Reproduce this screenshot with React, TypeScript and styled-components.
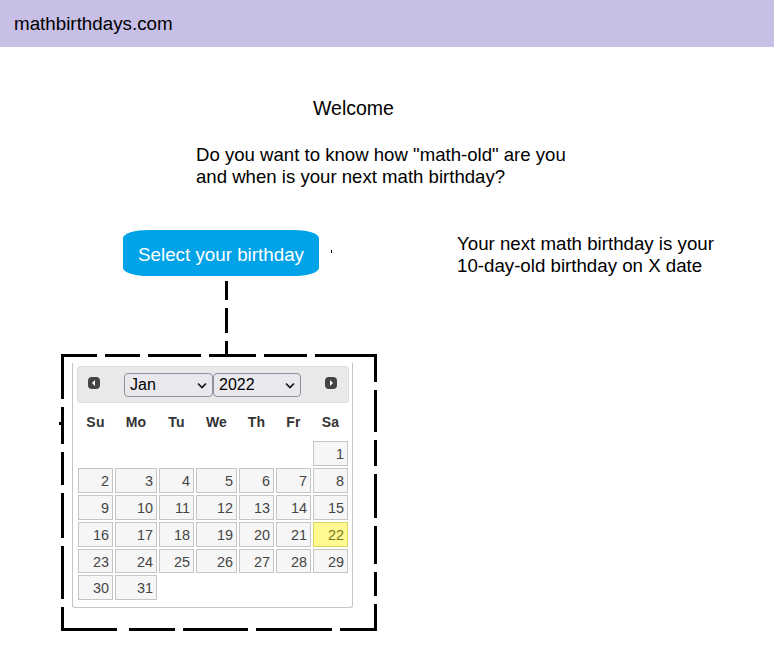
import React from "react";
import styled, { createGlobalStyle } from "styled-components";

const Global = createGlobalStyle`
  * { box-sizing: border-box; }
  body { margin: 0; background: #fff; color: #000; font-family: "Liberation Sans", Arial, sans-serif; }
`;

const Page = styled.div`
  width: 774px;
  height: 666px;
  overflow: hidden;
`;

const Bar = styled.header`
  height: 47px;
  padding: 13px 0 0 14px;
  background: #c8bfe7;
  font-size: 18.8px;
  line-height: 21px;
`;

const Intro = styled.section`
  height: 183px;
  padding: 50px 0 0 196px;
`;

const Heading = styled.h1`
  margin: 0 0 24px 117px;
  font-size: 19.5px;
  font-weight: 400;
  line-height: 23px;
`;

const Text = styled.p<{ $size: number }>`
  margin: 0;
  font-size: ${(p) => p.$size}px;
  line-height: 22px;
  white-space: nowrap;
`;

const Main = styled.main`
  display: grid;
  grid-template-columns: 457px auto;
`;

const Picker = styled.section`
  padding-left: 59px;
`;

const ButtonRow = styled.div`
  display: flex;
  align-items: flex-start;
  padding-left: 64px;
`;

const SelectButton = styled.button`
  width: 196px;
  height: 46px;
  padding: 4px 0 0;
  border: 0;
  border-radius: 26px / 8px;
  background: #00a2e8;
  color: #fff;
  font: 18.8px/22px "Liberation Sans", Arial, sans-serif;
  white-space: nowrap;
`;

const Speck = styled.i`
  width: 1px;
  height: 3px;
  margin: 20px 0 0 12px;
  background: #000;
`;

const Connector = styled.svg`
  display: block;
  margin: 5px 0 0 166px;
`;

const Frame = styled.div`
  position: relative;
  width: 318px;
  height: 277px;
  padding: 9px 0 0 13px;
`;

const Outline = styled.svg`
  position: absolute;
  inset: 0;
`;

const Calendar = styled.div`
  width: 281px;
  height: 245px;
  padding: 3px 3px 0 4px;
  border: 1px solid #c5c5c5;
  border-top: 0;
  border-radius: 0 0 3px 3px;
`;

const CalendarHeader = styled.div`
  display: flex;
  align-items: flex-start;
  width: 272px;
  height: 37px;
  padding: 7px 11px 0 10px;
  background: #e9e9e9;
  border: 1px solid #dddddd;
  border-radius: 3px;
`;

const ArrowIcon = styled.svg`
  margin-top: 3px;
`;

const Selects = styled.div`
  display: flex;
  margin: -1px auto 0 24px;
`;

const Select = styled.div<{ $width: number }>`
  display: flex;
  align-items: center;
  justify-content: space-between;
  width: ${(p) => p.$width}px;
  height: 24px;
  padding: 0 5px;
  border: 1px solid #8f8f9d;
  border-radius: 4px;
  background: #e9e9ed;
  font-size: 16px;
`;

const Days = styled.div`
  display: grid;
  grid-template-columns: 35px 42px 35px 41px 35px 35px 35px;
  grid-template-rows: 36px 25px 25px 25px 25px 24px 25px;
  gap: 2px;
  padding-left: 1px;
`;

const Weekday = styled.div`
  padding-top: 11px;
  color: #333;
  font-size: 14px;
  line-height: 16px;
  font-weight: 700;
  letter-spacing: 0.2px;
  text-align: center;
`;

const Day = styled.div<{ $today?: boolean }>`
  padding: 0 3px 0 0;
  border: 1px solid ${(p) => (p.$today ? "#dad55e" : "#c5c5c5")};
  background: ${(p) => (p.$today ? "#fffa90" : "#f6f6f6")};
  color: ${(p) => (p.$today ? "#777620" : "#454545")};
  font-size: 14.4px;
  line-height: 24px;
  text-align: right;
`;

const FirstDay = styled(Day)`
  grid-column: 7;
`;

const Result = styled.section`
  padding-top: 3px;
`;

const Arrow = ({ next = false }: { next?: boolean }) => (
  <ArrowIcon width="12" height="12" viewBox="0 0 12 12">
    <rect width="12" height="12" rx="4" fill="#444" />
    <path d={next ? "M5 3v6l3-3z" : "M7 3v6L4 6z"} fill="#fff" />
  </ArrowIcon>
);

const Chevron = () => (
  <svg width="10" height="8" viewBox="0 0 10 8" fill="none" stroke="#111" strokeWidth="1.6">
    <path d="M1 2.5l4 4 4-4" />
  </svg>
);

const dashes = [
  "M2 0h36v3H2zM46 0h35v3H46zM89 0h53v3H89zM150 0h47v3H150zM205 0h43v3H205zM256 0h62v3H256z",
  "M2 0h3v45H2zM2 53h3v37H2zM2 98h3v33H2zM2 139h3v45H2zM2 192h3v53H2zM2 253h3v24H2z",
  "M315 0h3v28h-3zM315 36h3v42h-3zM315 86h3v26h-3zM315 120h3v44h-3zM315 172h3v38h-3zM315 218h3v24h-3zM315 250h3v27h-3z",
  "M2 274h56v3H2zM70 274h46v3H70zM124 274h65v3H124zM197 274h76v3H197zM281 274h37v3H281z",
  "M0 68h2v3H0z",
];

const weekdays = ["Su", "Mo", "Tu", "We", "Th", "Fr", "Sa"];
const days = Array.from({ length: 30 }, (_, i) => i + 2);

export default function App() {
  return (
    <Page>
      <Global />
      <Bar>mathbirthdays.com</Bar>
      <Intro>
        <Heading>Welcome</Heading>
        <Text $size={18.6}>
          Do you want to know how "math-old" are you
          <br />
          and when is your next math birthday?
        </Text>
      </Intro>
      <Main>
        <Picker>
          <ButtonRow>
            <SelectButton>Select your birthday</SelectButton>
            <Speck />
          </ButtonRow>
          <Connector width="3" height="73" shapeRendering="crispEdges">
            <path d="M0 0h3v19H0zM0 27h3v25H0zM0 60h3v13H0z" />
          </Connector>
          <Frame>
            <Outline width="318" height="277" shapeRendering="crispEdges">
              {dashes.map((d) => (
                <path key={d} d={d} />
              ))}
            </Outline>
            <Calendar>
              <CalendarHeader>
                <Arrow />
                <Selects>
                  <Select $width={89}>
                    Jan <Chevron />
                  </Select>
                  <Select $width={88}>
                    2022 <Chevron />
                  </Select>
                </Selects>
                <Arrow next />
              </CalendarHeader>
              <Days>
                {weekdays.map((day) => (
                  <Weekday key={day}>{day}</Weekday>
                ))}
                <FirstDay>1</FirstDay>
                {days.map((day) => (
                  <Day key={day} $today={day === 22}>
                    {day}
                  </Day>
                ))}
              </Days>
            </Calendar>
          </Frame>
        </Picker>
        <Result>
          <Text $size={18.7}>
            Your next math birthday is your
            <br />
            10-day-old birthday on X date
          </Text>
        </Result>
      </Main>
    </Page>
  );
}
